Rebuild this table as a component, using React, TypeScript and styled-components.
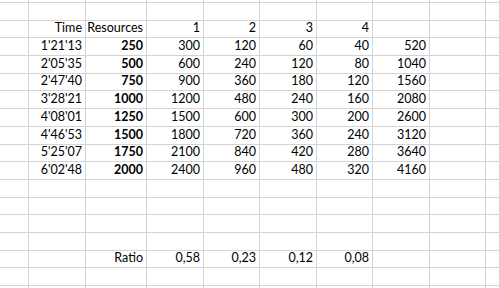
import styled, { createGlobalStyle } from "styled-components";

// 시트 데이터
const header = ["", "Time", "Resources", "1", "2", "3", "4", "", "", ""];

const rows: string[][] = [
  ["1'21'13", "250", "300", "120", "60", "40", "520"],
  ["2'05'35", "500", "600", "240", "120", "80", "1040"],
  ["2'47'40", "750", "900", "360", "180", "120", "1560"],
  ["3'28'21", "1000", "1200", "480", "240", "160", "2080"],
  ["4'08'01", "1250", "1500", "600", "300", "200", "2600"],
  ["4'46'53", "1500", "1800", "720", "360", "240", "3120"],
  ["5'25'07", "1750", "2100", "840", "420", "280", "3640"],
  ["6'02'48", "2000", "2400", "960", "480", "320", "4160"],
];

const ratio = ["", "", "Ratio", "0,58", "0,23", "0,12", "0,08", "", "", ""];

const COLS = 10;
const blank = () => Array(COLS).fill("");

// 전체 행 구성 (첫 행은 위쪽에 잘린 부분)
const sheet: { cells: string[]; sliver?: boolean }[] = [
  { cells: blank(), sliver: true },
  { cells: blank() },
  { cells: header },
  ...rows.map((r) => ({ cells: ["", ...r, "", ""] })),
  { cells: blank() },
  { cells: blank() },
  { cells: blank() },
  { cells: blank() },
  { cells: ratio },
  { cells: blank() },
  { cells: blank() },
];

export default function App() {
  return (
    <>
      <GlobalStyle />
      <Sheet>
        {sheet.map((row, ri) =>
          row.cells.map((value, ci) => (
            <Cell key={`${ri}-${ci}`} $sliver={row.sliver} $bold={ci === 2 && ri >= 3 && ri <= 10}>
              {value}
            </Cell>
          ))
        )}
      </Sheet>
    </>
  );
}

const GlobalStyle = createGlobalStyle`
  html, body {
    margin: 0;
    padding: 0;
    background: #ffffff;
  }
`;

const Sheet = styled.div`
  display: grid;
  grid-template-columns: 29px 57px 61px 57px 56px 57px 56px 57px 56px 1fr;
  width: 500px;
  height: 288px;
  overflow: hidden;
  font-family: Lato, "Open Sans", sans-serif;
  font-size: 12.5px;
  color: #000;
  background: #fff;
`;

const Cell = styled.div<{ $sliver?: boolean; $bold?: boolean }>`
  box-sizing: border-box;
  height: ${(p) => (p.$sliver ? "2.5px" : "17.7px")};
  border-right: 1px solid #d4d4d4;
  border-bottom: 1px solid #d4d4d4;
  padding: 0 3px 2px 0;
  display: flex;
  align-items: flex-end;
  justify-content: flex-end;
  line-height: 14px;
  white-space: nowrap;
  overflow: hidden;
  font-weight: ${(p) => (p.$bold ? 700 : 400)};
`;
